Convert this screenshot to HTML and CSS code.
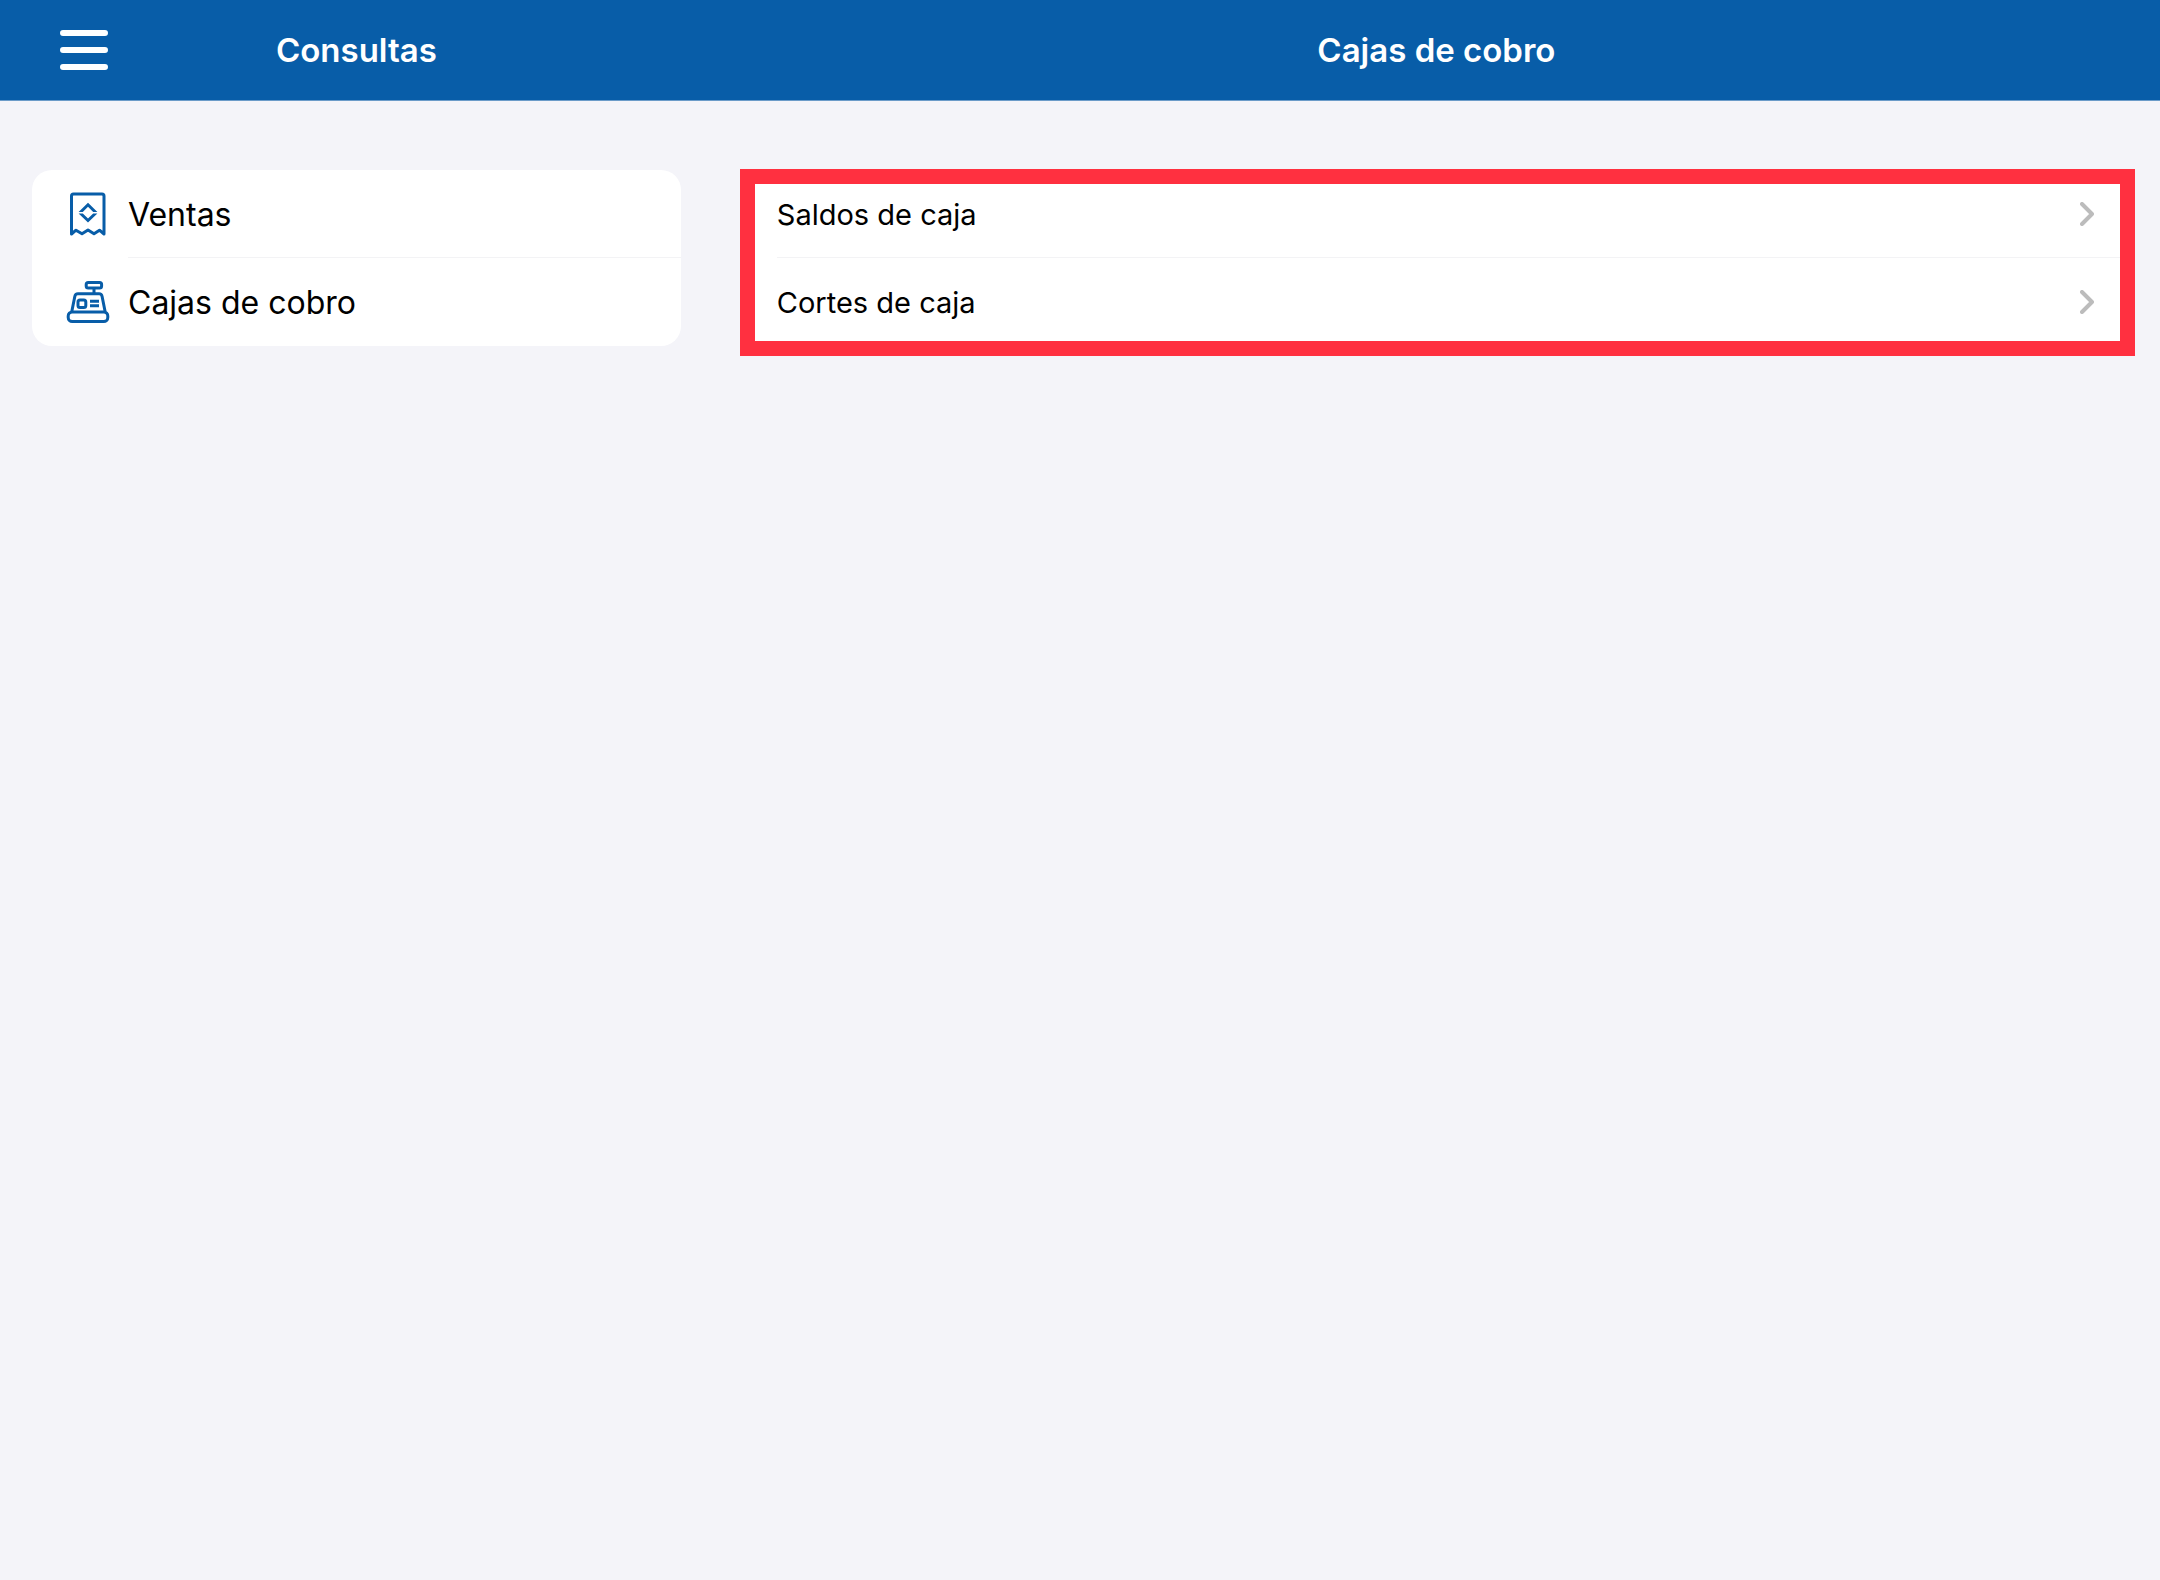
FILE: index.html
```html
<!DOCTYPE html>
<html lang="es">
<head>
<meta charset="utf-8">
<meta name="viewport" content="width=device-width, initial-scale=1">
<title>Consultas</title>
<link rel="stylesheet" href="styles.css">
</head>
<body>
<header class="bar">
  <div class="bar-side">
    <button class="menu" type="button" aria-label="Menú">
      <svg width="48" height="40" viewBox="0 0 48 40" fill="none" stroke="currentColor" stroke-width="6" stroke-linecap="round"><path d="M3 3H45M3 20H45M3 37H45"/></svg>
    </button>
    <h1 class="title">Consultas</h1>
  </div>
  <h2 class="title">Cajas de cobro</h2>
</header>
<div class="panes">
  <nav class="pane">
    <ul class="card">
      <li><a class="row row-icon" href="#ventas">
        <svg class="icon" viewBox="0 0 44 44"><path d="M5.5 42V4Q5.5 2 7.5 2H36Q38 2 38 4V42L33.5 38.2L28 41.8L22 38L16 41.8L10 38.2Z"/><path class="solid" d="M12.6 20L22 10.8L31.4 20H27.2L22 14.8L16.8 20ZM12.6 21.4L22 30.6L31.4 21.4H27.2L22 26.6L16.8 21.4Z"/></svg>
        <span class="label">Ventas</span>
      </a></li>
      <li><a class="row row-icon" href="#cajas" aria-current="page">
        <svg class="icon" viewBox="0 0 44 44"><rect x="20.2" y="2.5" width="15.4" height="5.6" rx="2"/><path d="M28 8V14M5.7 32L8.8 16.5Q9.3 13.8 12 13.8H33Q35.6 13.8 36.1 16.5L39.2 32"/><rect x="2.2" y="32" width="39.6" height="9.6" rx="4"/><rect x="12" y="20" width="7.8" height="7.5" rx="2"/><path d="M24 21.2H33M24 25.8H33"/></svg>
        <span class="label">Cajas de cobro</span>
      </a></li>
    </ul>
  </nav>
  <main class="pane">
    <ul class="card highlighted">
      <li><a class="row" href="#saldos">
        <span class="label small">Saldos de caja</span>
        <svg class="chevron" viewBox="0 0 14 24"><path d="M2 2L12 12L2 22"/></svg>
      </a></li>
      <li><a class="row" href="#cortes">
        <span class="label small">Cortes de caja</span>
        <svg class="chevron" viewBox="0 0 14 24"><path d="M2 2L12 12L2 22"/></svg>
      </a></li>
    </ul>
  </main>
</div>
</body>
</html>
```
FILE: styles.css
```css
* { box-sizing: border-box; }

body {
  margin: 0;
  min-height: 100vh;
  background: #f4f4f9;
  color: #000;
  font-family: Inter, "Liberation Sans", sans-serif;
}

.bar,
.panes {
  display: grid;
  grid-template-columns: 33% 1fr;
}

.bar {
  height: 101px;
  background: #085da8;
  border-bottom: 1px solid #6b9bc9;
  color: #fff;
  align-items: center;
}

.bar-side {
  display: grid;
  grid-template-columns: 108px 1fr 108px;
  align-items: center;
}

.menu {
  display: flex;
  justify-content: flex-end;
  padding: 0;
  border: 0;
  background: none;
  color: inherit;
}

.title {
  margin: 0;
  font-size: 33px;
  line-height: 40px;
  font-weight: 600;
  text-align: center;
}

.pane { padding: 69px 32px; }

.card {
  margin: 0;
  padding: 0;
  list-style: none;
  background: #fff;
  border-radius: 20px;
}

.row {
  display: flex;
  align-items: center;
  height: 88px;
  padding: 0 34px 0 32px;
  color: inherit;
  text-decoration: none;
}

.row-icon {
  padding-left: 34px;
  gap: 18px;
}

.card li:first-child {
  background: linear-gradient(#f3f3f5, #f3f3f5) 32px 100% / 100% 1px no-repeat;
}

nav .card li:first-child { background-position-x: 96px; }

.label {
  flex: 1;
  padding-top: 2px;
  font-size: 32px;
  line-height: 40px;
}

.small { font-size: 29px; }

.icon {
  width: 44px;
  height: 44px;
  fill: none;
  stroke: #085da8;
  stroke-width: 3;
  stroke-linejoin: round;
}

.icon .solid {
  fill: #085da8;
  stroke: none;
}

.chevron {
  width: 14px;
  height: 24px;
  fill: none;
  stroke: #bcbcbc;
  stroke-width: 4;
  stroke-linecap: round;
  stroke-linejoin: round;
}

.highlighted { position: relative; }

/* Callout frame drawn over the card's edges */
.highlighted::after {
  content: "";
  position: absolute;
  inset: -1px -7px -10px -5px;
  border: 15px solid #ff3040;
  pointer-events: none;
}
```
